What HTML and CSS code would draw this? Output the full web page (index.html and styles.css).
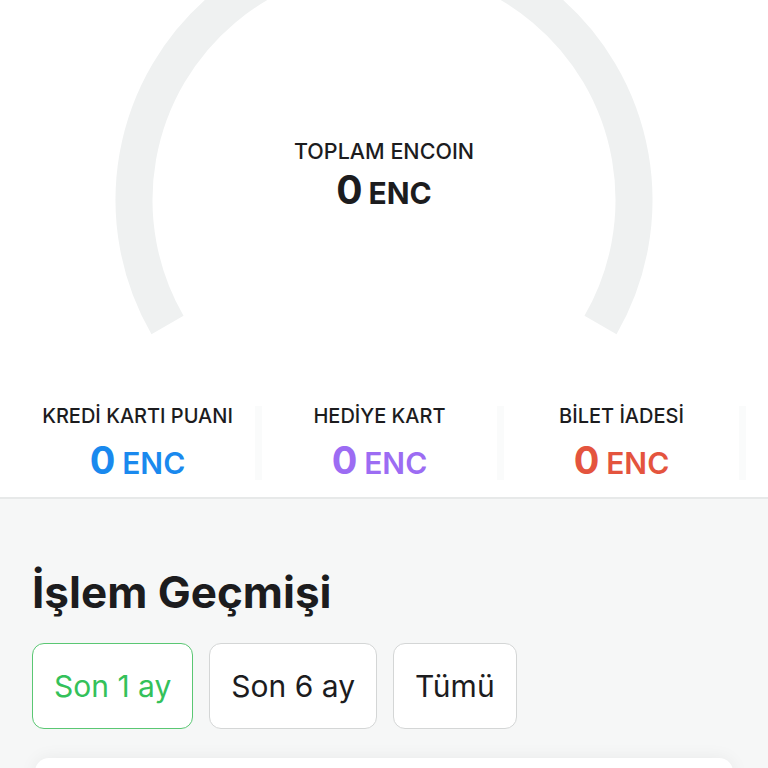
FILE: index.html
```html
<!DOCTYPE html>
<html lang="tr">
<head>
<meta charset="utf-8">
<link rel="stylesheet" href="styles.css">
</head>
<body>
<div class="page">
  <section class="hero">
    <svg class="gauge" width="768" height="392" viewBox="0 0 768 392" aria-hidden="true">
      <path d="M167.5 325 A250 250 0 1 1 600.5 325" fill="none" stroke="#eff1f1" stroke-width="37" stroke-linecap="butt"/>
    </svg>
    <div class="total">
      <div class="total-label">TOPLAM ENCOIN</div>
      <div class="total-value"><span class="num">0</span> <span class="unit">ENC</span></div>
    </div>
  </section>
  <section class="stats">
    <div class="stat">
      <div class="stat-label">KREDİ KARTI PUANI</div>
      <div class="stat-value blue"><span class="num">0</span> <span class="unit">ENC</span></div>
    </div>
    <div class="stat">
      <div class="stat-label">HEDİYE KART</div>
      <div class="stat-value purple"><span class="num">0</span> <span class="unit">ENC</span></div>
    </div>
    <div class="stat">
      <div class="stat-label">BİLET İADESİ</div>
      <div class="stat-value red"><span class="num">0</span> <span class="unit">ENC</span></div>
    </div>
  </section>
  <section class="history">
    <h1 class="history-title">İşlem Geçmişi</h1>
    <div class="filters">
      <button class="filter active">Son 1 ay</button>
      <button class="filter">Son 6 ay</button>
      <button class="filter">Tümü</button>
    </div>
    <div class="card"></div>
  </section>
</div>
</body>
</html>
```
FILE: styles.css
```css
* { box-sizing: border-box; }
html, body { margin: 0; padding: 0; }
body {
  width: 768px;
  height: 768px;
  overflow: hidden;
  background: #f6f7f7;
  font-family: Inter, "Noto Sans", "Liberation Sans", sans-serif;
  color: #1c1c1e;
}
.page { display: flex; flex-direction: column; }

.hero {
  display: grid;
  height: 392px;
  background: #fff;
}
.gauge, .total { grid-area: 1 / 1; }
.gauge { display: block; }
.total {
  justify-self: center;
  align-self: start;
  margin-top: 138px;
  display: flex;
  flex-direction: column;
  align-items: center;
}
.total-label {
  font-size: 21.5px;
  line-height: 26px;
  font-weight: 500;
}
.total-value {
  margin-top: 4px;
  line-height: 44px;
  font-weight: 700;
  word-spacing: 2px;
}
.total-value .num { font-size: 39px; }
.total-value .unit { font-size: 30px; }

.stats {
  display: flex;
  background: #fff;
  padding: 14px 0 17px 20px;
  border-bottom: 2px solid #e7e9e9;
}
.stat {
  width: 242px;
  height: 74px;
  display: flex;
  flex-direction: column;
  align-items: center;
  border-right: 7px solid #fafbfb;
}
.stat-label {
  font-size: 20px;
  line-height: 20px;
  font-weight: 500;
  color: #1c1c1e;
}
.stat-value {
  margin-top: 12px;
  line-height: 44px;
  font-weight: 700;
  word-spacing: 3px;
}
.stat-value .num { font-size: 38px; }
.stat-value .unit { font-size: 30px; font-weight: 600; }
.blue { color: #1a89ee; }
.purple { color: #9c6cf3; }
.red { color: #e4543e; }

.history {
  padding: 65px 32px 0 32px;
  display: flex;
  flex-direction: column;
}
.history-title {
  margin: 0;
  font-size: 44px;
  line-height: 56px;
  font-weight: 700;
  color: #1c1c1e;
}
.filters {
  display: flex;
  gap: 16px;
  margin-top: 23px;
}
.filter {
  height: 86px;
  padding: 0 21px;
  border: 1px solid #d4d6d6;
  border-radius: 12px;
  background: #fff;
  font-family: inherit;
  font-size: 30px;
  font-weight: 400;
  color: #1c1c1e;
}
.filter.active {
  border-color: #5ac773;
  color: #34c15a;
}
.card {
  margin: 29px 3px 0 3px;
  height: 120px;
  background: #fff;
  border-radius: 14px;
  box-shadow: 0 0 18px rgba(0, 0, 0, 0.06);
}
```
